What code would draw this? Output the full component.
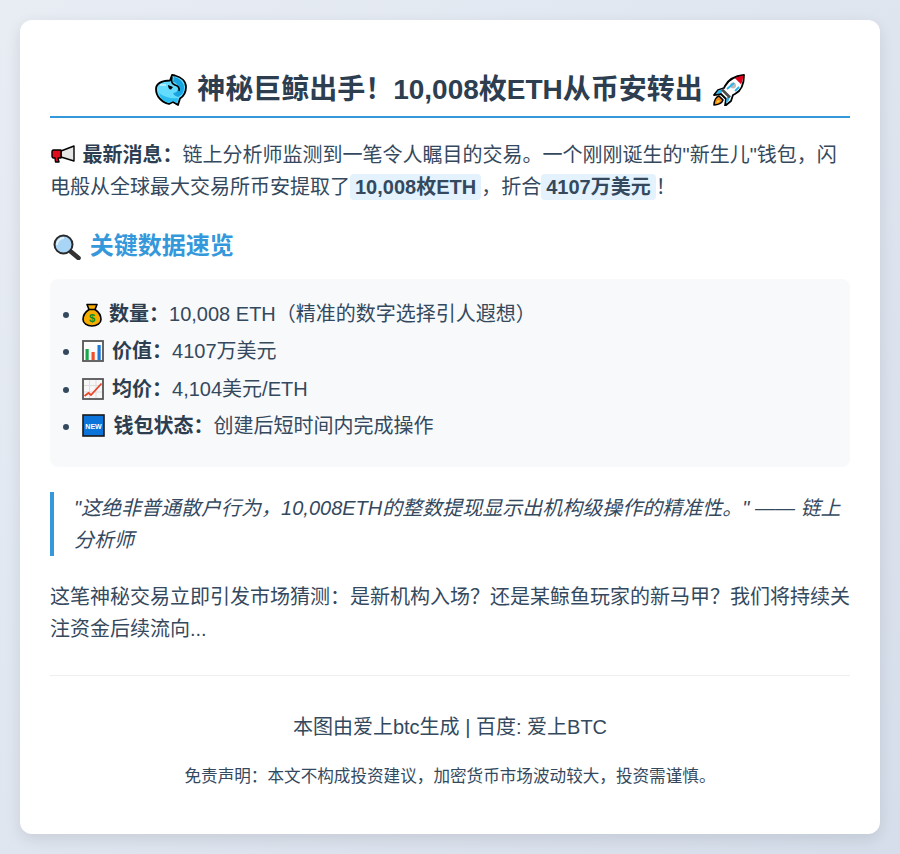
<div class="card">
  <h1>
    <svg class="emoji whale" viewBox="0 0 32 32"><path d="M1 15C1 10 6 6.500 15 6.500L17 1l3 .5C26 3 31 7 31 13c0 5-2 9-6 11.500L23 31l-5-3-4 2C6 28 1 22 1 15z" fill="#63dcff" stroke="#000" stroke-width="1.800" stroke-linejoin="round"/><path d="M19 3c5 1 10 5 10 10 0 5-2 8-6 10-3-1-4-2-5-4 4 0 5-3 5-6 0-3-3-5-5-5z" fill="#18a4de"/><path d="M4 19c5 4 12 6 19 5l-1 5-4-2-4 2C9 28 5 24 4 19z" fill="#2bbdee"/><path d="M17 3c-1 4 0 7 3 8 3 1 5 3 4 6" fill="none" stroke="#000" stroke-width="1.600"/><path d="M13 11l5 2-2 2.500c-2 0-3-2-3-4.500z" fill="#000"/><path d="M5 11h6" stroke="#c9f4ff" stroke-width="1.500"/></svg>
    神秘巨鲸出手！10,008枚ETH从币安转出
    <svg class="emoji rocket" viewBox="0 0 32 32"><path d="M31 1C22 2 15 6 12 12l-1 2-6 2-4 5 7-1 5 5-1 7 6-5 2-6 2-1c6-3 9-10 9-19z" fill="#fff" stroke="#000" stroke-width="1.800" stroke-linejoin="round"/><path d="M30.500 1.500c-3 .4-6 1.400-8.500 2.700l6 6c1.300-2.600 2.100-5.700 2.500-8.700z" fill="#e3001b"/><circle cx="20" cy="11.500" r="3" fill="#bdbdbd"/><path d="M11 14.500l-5.500 2-3 3.500 6-1c.5-2 1.500-3.500 2.500-4.500zM17.500 21l-2 6 -2.500 2 .7-5.500c1.500-.5 2.800-1.500 3.800-2.500z" fill="#27b4ec"/><path d="M14 15l7-6M22 17l4-4" stroke="#27b4ec" stroke-width="1.800"/><path d="M6 22c-3 1-5 5-5 9 4 0 8-2 9-5z" fill="#f7880f" stroke="#000" stroke-width="1.600" stroke-linejoin="round"/><path d="M5 26c-1 1-1.500 2-1.500 3 1.500-.2 3-1 3.500-2z" fill="#ffd23d"/><path d="M9 15.500l8 8" stroke="#4d4d4d" stroke-width="2.600"/></svg>
  </h1>

  <p class="news">
    <svg class="emoji mega" viewBox="0 0 25 18"><path d="M10 6L23 1v15L10 12z" fill="#e6e6e6" stroke="#000" stroke-width="1.400" stroke-linejoin="round"/><path d="M2.500 5H10v8H7l1 4H4.500L4 13H2.500C1.500 13 1 12 1 11V7c0-1 .5-2 1.500-2z" fill="#e00b1c" stroke="#000" stroke-width="1.400" stroke-linejoin="round"/></svg>
    <strong>最新消息：</strong>链上分析师监测到一笔令人瞩目的交易。一个刚刚诞生的"新生儿"钱包，闪电般从全球最大交易所币安提取了<span class="hl">10,008枚ETH</span>，折合<span class="hl">4107万美元</span>！
  </p>

  <h2>
    <svg class="emoji lens" viewBox="0 0 28 26"><path d="M16.500 16.500L25.500 24" stroke="#333" stroke-width="4.600" stroke-linecap="round"/><circle cx="10.500" cy="10.500" r="9" fill="#a8d4f6" stroke="#2a2a2a" stroke-width="2"/><path d="M4 11c0-4 3-7 7-7" fill="none" stroke="#dff1ff" stroke-width="2"/></svg>
    关键数据速览
  </h2>

  <ul class="panel">
    <li>
      <svg class="emoji bag" viewBox="0 0 20 24"><path d="M5 1.500h10l-2 5c3 2 6 6 6 10 0 3.500-4 6.500-9 6.500s-9-3-9-6.500c0-4 3-8 6-10z" fill="#f6ad00" stroke="#000" stroke-width="1.600" stroke-linejoin="round"/><path d="M6.500 6.500h7" stroke="#000" stroke-width="1.500"/><text x="10" y="19" font-size="11" font-family="Liberation Sans, sans-serif" font-weight="700" text-anchor="middle" fill="#0a8a32">$</text></svg>
      <strong>数量：</strong>10,008 ETH（精准的数字选择引人遐想）
    </li>
    <li>
      <svg class="emoji box" viewBox="0 0 22 22"><rect x="1" y="1" width="20" height="20" fill="#fcfcfc" stroke="#555" stroke-width="1.800"/><rect x="3.500" y="9" width="3.200" height="11" fill="#17a84a"/><rect x="9.500" y="12" width="3.200" height="8" fill="#f0502a"/><rect x="15.500" y="5" width="3.200" height="15" fill="#1c79d6"/></svg>
      <strong>价值：</strong>4107万美元
    </li>
    <li>
      <svg class="emoji box" viewBox="0 0 22 22"><rect x="1" y="1" width="20" height="20" fill="#f7f7f7" stroke="#555" stroke-width="1.800"/><path d="M2 7.500h18M2 14h18M7.500 2v18M14 2v18" stroke="#ddd" stroke-width="1"/><path d="M2.500 18l4-3 2.500 2L19.500 5.500" fill="none" stroke="#ec4528" stroke-width="1.800"/></svg>
      <strong>均价：</strong>4,104美元/ETH
    </li>
    <li>
      <svg class="emoji box new" viewBox="0 0 23 23"><rect x="1" y="1" width="21" height="21" fill="#0a74da" stroke="#1a1a1a" stroke-width="1.600"/><text x="11.500" y="14.500" font-size="7" font-family="Liberation Sans, sans-serif" font-weight="700" text-anchor="middle" fill="#fff">NEW</text></svg>
      <strong>钱包状态：</strong>创建后短时间内完成操作
    </li>
  </ul>

  <blockquote>"这绝非普通散户行为，10,008ETH的整数提现显示出机构级操作的精准性。" —— 链上分析师</blockquote>

  <p class="closing">这笔神秘交易立即引发市场猜测：是新机构入场？还是某鲸鱼玩家的新马甲？我们将持续关注资金后续流向...</p>

  <footer>
    <p class="credit">本图由爱上btc生成 | 百度: 爱上BTC</p>
    <p class="disclaimer">免责声明：本文不构成投资建议，加密货币市场波动较大，投资需谨慎。</p>
  </footer>
</div>

<style>
  :global(body) {
    margin: 0;
    padding: 20px;
    background: linear-gradient(135deg, #e8edf4, #d6deeb);
    font-family: "Liberation Sans", "Noto Sans CJK SC", sans-serif;
    color: #34495e;
    font-size: 20px;
    line-height: 1.6;
  }
  .card {
    box-sizing: border-box;
    padding: 30px 30px 43px;
    background: #fff;
    border-radius: 12px;
    box-shadow: 0 5px 15px rgba(0, 0, 0, 0.1);
  }
  .whale,
  .rocket {
    width: 32px;
    height: 32px;
    margin: -6px 2px;
    vertical-align: -1px;
  }
  .mega {
    width: 25px;
    height: 18px;
    margin: 0 1px;
    vertical-align: -1px;
  }
  .lens {
    width: 28px;
    height: 26px;
    margin: -6px 2px -6px 3px;
    vertical-align: 0;
  }
  .bag {
    width: 20px;
    height: 24px;
    margin: -5px 1.500px -5px 0;
    vertical-align: -1px;
  }
  .box {
    width: 22px;
    height: 22px;
    margin: -4px 2.500px -4px 0;
    vertical-align: 0;
  }
  .new {
    width: 23px;
    height: 23px;
    margin-right: 3px;
  }
  h1 {
    margin: 18px 0 21px;
    padding-bottom: 3px;
    font-size: 28px;
    text-align: center;
    color: #2c3e50;
    border-bottom: 2px solid #3498db;
  }
  p {
    margin: 0;
  }
  strong {
    color: #2c3e50;
  }
  .hl {
    background: #e3f2fd;
    border-radius: 4px;
    padding: 2px 5px;
    font-weight: 700;
  }
  h2 {
    margin: 24px 0 14px;
    font-size: 24px;
    color: #3498db;
  }
  .panel {
    margin: 0;
    background: #f8f9fa;
    border-radius: 8px;
    padding: 19px 20px 20px 32px;
  }
  li {
    margin-bottom: 5.300px;
  }
  blockquote {
    margin: 25px 0;
    padding-left: 20px;
    border-left: 4px solid #3498db;
    font-style: italic;
  }
  footer {
    margin-top: 30px;
    padding-top: 35px;
    border-top: 1px solid #eee;
    text-align: center;
  }
  .credit {
    margin-bottom: 21px;
  }
  .disclaimer {
    font-size: 16.6px;
  }
</style>
